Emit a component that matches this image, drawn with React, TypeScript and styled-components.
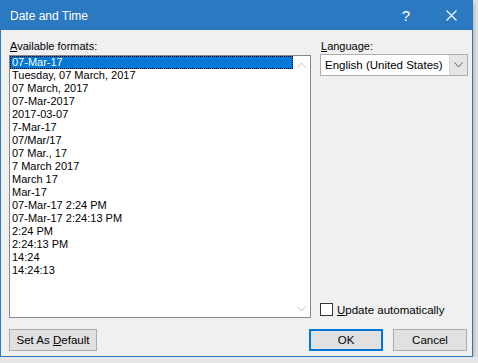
import React from 'react';
import styled, { createGlobalStyle } from 'styled-components';

const formats = [
  '07-Mar-17',
  'Tuesday, 07 March, 2017',
  '07 March, 2017',
  '07-Mar-2017',
  '2017-03-07',
  '7-Mar-17',
  '07/Mar/17',
  '07 Mar., 17',
  '7 March 2017',
  'March 17',
  'Mar-17',
  '07-Mar-17 2:24 PM',
  '07-Mar-17 2:24:13 PM',
  '2:24 PM',
  '2:24:13 PM',
  '14:24',
  '14:24:13',
];

const Chevron: React.FC<{ dir: 'up' | 'down'; color?: string }> = ({ dir, color = '#c2c2c2' }) => (
  <svg width="9" height="6" viewBox="0 0 9 6">
    <path
      d={dir === 'up' ? 'M0.5 5.5 L4.5 1 L8.5 5.5' : 'M0.5 0.5 L4.5 5 L8.5 0.5'}
      fill="none"
      stroke={color}
      strokeWidth="1"
    />
  </svg>
);

const App: React.FC = () => {
  return (
    <>
      <GlobalStyle />
      <Window>
        <TitleBar>
          <Title>Date and Time</Title>
          <TitleButton>?</TitleButton>
          <TitleButton>
            <svg width="11" height="11" viewBox="0 0 11 11">
              <path d="M0.5 0.5 L10.5 10.5 M10.5 0.5 L0.5 10.5" stroke="#fff" strokeWidth="1.1" />
            </svg>
          </TitleButton>
        </TitleBar>
        <Body>
          <Main>
            <LeftColumn>
              <Label>
                <Key>A</Key>vailable formats:
              </Label>
              <ListBox>
                <Items>
                  {formats.map((f, i) => (
                    <Item key={f} selected={i === 0}>
                      {f}
                    </Item>
                  ))}
                </Items>
                <ScrollBar>
                  <ArrowButton>
                    <Chevron dir="up" />
                  </ArrowButton>
                  <ArrowButton>
                    <Chevron dir="down" />
                  </ArrowButton>
                </ScrollBar>
              </ListBox>
            </LeftColumn>
            <RightColumn>
              <Label short>
                <Key>L</Key>anguage:
              </Label>
              <Combo>
                <ComboText>English (United States)</ComboText>
                <ComboButton>
                  <Chevron dir="down" color="#606060" />
                </ComboButton>
              </Combo>
              <Spacer />
              <CheckRow>
                <CheckBox />
                <span>
                  <Key>U</Key>pdate automatically
                </span>
              </CheckRow>
            </RightColumn>
          </Main>
          <Footer>
            <Button width={88}>
              <span>
                Set As <Key>D</Key>efault
              </span>
            </Button>
            <Spacer />
            <Button width={74} primary>
              <span>OK</span>
            </Button>
            <Button width={74}>
              <span>Cancel</span>
            </Button>
          </Footer>
        </Body>
      </Window>
    </>
  );
};

export default App;

const GlobalStyle = createGlobalStyle`
  body {
    margin: 0;
    background: #e6e6e6;
    font-family: 'Liberation Sans', Arial, sans-serif;
    font-size: 11px;
    color: #000;
  }
`;

const Window = styled.div`
  box-sizing: border-box;
  width: 473px;
  height: 357px;
  border: 1px solid #2b79c1;
  background: #f0f0f0;
  display: flex;
  flex-direction: column;
  box-shadow: 0 2px 6px rgba(0, 0, 0, 0.35);
`;

const TitleBar = styled.div`
  height: 29px;
  background: #2b79c1;
  color: #fff;
  display: flex;
  align-items: center;
  padding-left: 10px;
  margin: -1px -1px 0;
  padding-top: 1px;
`;

const Title = styled.div`
  flex: 1;
  font-size: 12px;
`;

const TitleButton = styled.div`
  width: 46px;
  display: flex;
  justify-content: center;
  align-items: center;
  font-size: 15px;
  &:last-child {
    width: 44px;
  }
`;

const Body = styled.div`
  flex: 1;
  display: flex;
  flex-direction: column;
  padding: 8px 4px 5px 8px;
`;

const Main = styled.div`
  height: 280px;
  display: flex;
  gap: 9px;
`;

const LeftColumn = styled.div`
  width: 302px;
  display: flex;
  flex-direction: column;
`;

const RightColumn = styled.div`
  width: 148px;
  display: flex;
  flex-direction: column;
`;

const Label = styled.div<{ short?: boolean }>`
  height: ${(p) => (p.short ? 16 : 17)}px;
  line-height: 16px;
  font-size: 11px;
  padding-left: 1px;
`;

const Key = styled.span`
  text-decoration: underline;
`;

const ListBox = styled.div`
  flex: 1;
  display: flex;
  background: #fff;
  border: 1px solid #828790;
`;

const Items = styled.div`
  flex: 1;
  display: flex;
  flex-direction: column;
`;

const Item = styled.div<{ selected?: boolean }>`
  box-sizing: border-box;
  height: 13px;
  line-height: 13px;
  padding-left: 2px;
  white-space: nowrap;
  background: ${(p) => (p.selected ? '#0078d7' : 'transparent')};
  color: ${(p) => (p.selected ? '#fff' : '#000')};
  outline: ${(p) => (p.selected ? '1px dotted #000' : 'none')};
  outline-offset: -1px;
`;

const ScrollBar = styled.div`
  width: 17px;
  display: flex;
  flex-direction: column;
  justify-content: space-between;
`;

const ArrowButton = styled.div`
  height: 17px;
  display: flex;
  align-items: center;
  justify-content: center;
`;

const Combo = styled.div`
  height: 22px;
  box-sizing: border-box;
  border: 1px solid #adadad;
  background: #fff;
  display: flex;
`;

const ComboText = styled.div`
  flex: 1;
  line-height: 20px;
  padding-left: 4px;
  font-size: 11.5px;
`;

const ComboButton = styled.div`
  width: 17px;
  background: #e5e5e5;
  border-left: 1px solid #d4d4d4;
  display: flex;
  align-items: center;
  justify-content: center;
`;

const Spacer = styled.div`
  flex: 1;
`;

const CheckRow = styled.div`
  height: 15px;
  margin-bottom: 1px;
  display: flex;
  align-items: center;
  gap: 4px;
  font-size: 11.5px;
`;

const CheckBox = styled.div`
  box-sizing: border-box;
  width: 13px;
  height: 13px;
  border: 1px solid #333;
  background: #fff;
`;

const Footer = styled.div`
  margin-top: 11px;
  display: flex;
  gap: 10px;
`;

const Button = styled.div<{ width: number; primary?: boolean }>`
  box-sizing: border-box;
  width: ${(p) => p.width}px;
  height: 22px;
  display: flex;
  align-items: center;
  justify-content: center;
  background: #e1e1e1;
  border: ${(p) => (p.primary ? '2px solid #0078d7' : '1px solid #adadad')};
  font-size: 11.5px;
  &:last-child {
    margin-right: 1px;
  }
`;
